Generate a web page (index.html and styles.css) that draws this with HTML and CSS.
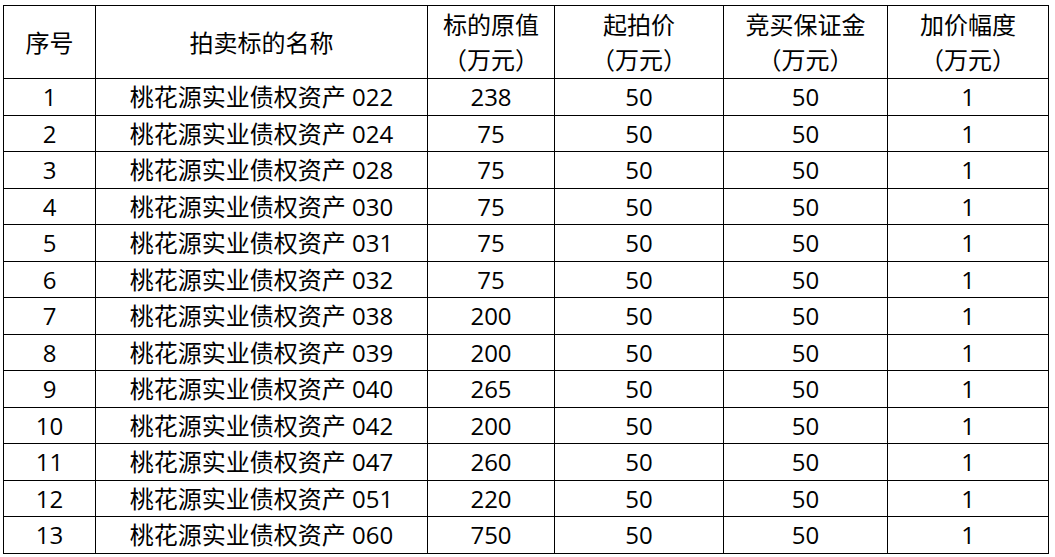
FILE: index.html
```html
<!DOCTYPE html>
<html lang="zh">
<head>
<meta charset="utf-8">
<link rel="stylesheet" href="styles.css">
</head>
<body>
<div class="wrap">
<table class="tbl">
<colgroup>
<col class="c1"><col class="c2"><col class="c3"><col class="c4"><col class="c5"><col class="c6">
</colgroup>
<thead>
<tr><th>序号</th><th>拍卖标的名称</th><th>标的原值<br>（万元）</th><th>起拍价<br>（万元）</th><th>竞买保证金<br>（万元）</th><th>加价幅度<br>（万元）</th></tr>
</thead>
<tbody>
<tr><td>1</td><td>桃花源实业债权资产 022</td><td>238</td><td>50</td><td>50</td><td>1</td></tr>
<tr><td>2</td><td>桃花源实业债权资产 024</td><td>75</td><td>50</td><td>50</td><td>1</td></tr>
<tr><td>3</td><td>桃花源实业债权资产 028</td><td>75</td><td>50</td><td>50</td><td>1</td></tr>
<tr><td>4</td><td>桃花源实业债权资产 030</td><td>75</td><td>50</td><td>50</td><td>1</td></tr>
<tr><td>5</td><td>桃花源实业债权资产 031</td><td>75</td><td>50</td><td>50</td><td>1</td></tr>
<tr><td>6</td><td>桃花源实业债权资产 032</td><td>75</td><td>50</td><td>50</td><td>1</td></tr>
<tr><td>7</td><td>桃花源实业债权资产 038</td><td>200</td><td>50</td><td>50</td><td>1</td></tr>
<tr><td>8</td><td>桃花源实业债权资产 039</td><td>200</td><td>50</td><td>50</td><td>1</td></tr>
<tr><td>9</td><td>桃花源实业债权资产 040</td><td>265</td><td>50</td><td>50</td><td>1</td></tr>
<tr><td>10</td><td>桃花源实业债权资产 042</td><td>200</td><td>50</td><td>50</td><td>1</td></tr>
<tr><td>11</td><td>桃花源实业债权资产 047</td><td>260</td><td>50</td><td>50</td><td>1</td></tr>
<tr><td>12</td><td>桃花源实业债权资产 051</td><td>220</td><td>50</td><td>50</td><td>1</td></tr>
<tr><td>13</td><td>桃花源实业债权资产 060</td><td>750</td><td>50</td><td>50</td><td>1</td></tr>
</tbody>
</table>
</div>
</body>
</html>
```
FILE: styles.css
```css
html, body {
  margin: 0;
  padding: 0;
  background: #fff;
}
.wrap {
  padding: 5px 0 0 3px;
}
.tbl {
  border-collapse: collapse;
  table-layout: fixed;
  width: 1045px;
  font-family: "Open Sans", "Noto Sans CJK SC", sans-serif;
  font-size: 24px;
  color: #000;
}
.c1 { width: 92px; }
.c2 { width: 332px; }
.c3 { width: 127px; }
.c4 { width: 169px; }
.c5 { width: 164px; }
.c6 { width: 161px; }
.tbl th, .tbl td {
  border: 1.5px solid #000;
  text-align: center;
  vertical-align: middle;
  padding: 0;
  font-weight: normal;
  line-height: 35px;
}
.tbl th {
  height: 72px;
}
.tbl td {
  height: 35.5px;
}
```
